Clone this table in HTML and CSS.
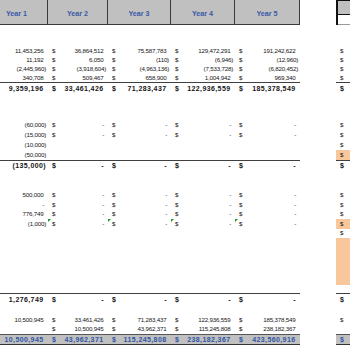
FILE: index.html
```html
<!DOCTYPE html>
<html>
<head>
<meta charset="utf-8">
<link rel="stylesheet" href="styles.css">
</head>
<body>
<div class="sheet">
  <div class="row h25">
    <div class="hc">Year 1</div><div class="hc">Year 2</div><div class="hc">Year 3</div><div class="hc">Year 4</div><div class="hc">Year 5</div>
    <div></div>
    <div class="shd"><div class="t"></div><div class="u"></div></div>
  </div>
  <div class="sp22"></div>

  <div class="row h9">
    <div class="c f"><span class="p">11,453,256</span></div>
    <div class="c"><span>$</span><span class="p">36,864,512</span></div>
    <div class="c"><span>$</span><span class="p">75,587,783</span></div>
    <div class="c"><span>$</span><span class="p">129,472,291</span></div>
    <div class="c"><span>$</span><span class="p">191,242,622</span></div>
    <div></div><div class="c"><span>$</span></div>
  </div>
  <div class="row h9">
    <div class="c f"><span class="p">11,192</span></div>
    <div class="c"><span>$</span><span class="p">6,050</span></div>
    <div class="c"><span>$</span><span>(110)</span></div>
    <div class="c"><span>$</span><span>(6,946)</span></div>
    <div class="c"><span>$</span><span>(12,960)</span></div>
    <div></div><div class="c"><span>$</span></div>
  </div>
  <div class="row h9">
    <div class="c f"><span>(2,445,960)</span></div>
    <div class="c"><span>$</span><span>(3,918,604)</span></div>
    <div class="c"><span>$</span><span>(4,963,136)</span></div>
    <div class="c"><span>$</span><span>(7,533,728)</span></div>
    <div class="c"><span>$</span><span>(6,820,452)</span></div>
    <div></div><div class="c"><span>$</span></div>
  </div>
  <div class="row h9">
    <div class="c f bb"><span class="p">340,708</span></div>
    <div class="c bb"><span>$</span><span class="p">509,467</span></div>
    <div class="c bb"><span>$</span><span class="p">658,900</span></div>
    <div class="c bb"><span>$</span><span class="p">1,004,942</span></div>
    <div class="c bb"><span>$</span><span class="p">969,340</span></div>
    <div></div><div class="c bb"><span>$</span></div>
  </div>
  <div class="row h10 b">
    <div class="c f"><span class="p">9,359,196</span></div>
    <div class="c"><span>$</span><span class="p">33,461,426</span></div>
    <div class="c"><span>$</span><span class="p">71,283,437</span></div>
    <div class="c"><span>$</span><span class="p">122,936,559</span></div>
    <div class="c"><span>$</span><span class="p">185,378,549</span></div>
    <div></div><div class="c"><span>$</span></div>
  </div>
  <div class="sp28"></div>

  <div class="row h9">
    <div class="c f"><span>(60,000)</span></div>
    <div class="c"><span>$</span><span class="d">-</span></div>
    <div class="c"><span>$</span><span class="d">-</span></div>
    <div class="c"><span>$</span><span class="d">-</span></div>
    <div class="c"><span>$</span><span class="d">-</span></div>
    <div></div><div class="c"><span>$</span></div>
  </div>
  <div class="row h10">
    <div class="c f"><span>(15,000)</span></div>
    <div class="c"><span>$</span><span class="d">-</span></div>
    <div class="c"><span>$</span><span class="d">-</span></div>
    <div class="c"><span>$</span><span class="d">-</span></div>
    <div class="c"><span>$</span><span class="d">-</span></div>
    <div></div><div class="c"><span>$</span></div>
  </div>
  <div class="row h10">
    <div class="c f"><span>(10,000)</span></div>
    <div class="c"></div><div class="c"></div><div class="c"></div><div class="c"></div>
    <div></div><div class="c"><span>$</span></div>
  </div>
  <div class="row h11">
    <div class="c f bb"><span>(50,000)</span></div>
    <div class="c bb"></div><div class="c bb"></div><div class="c bb"></div><div class="c bb"></div>
    <div></div><div class="c bb o"><span>$</span></div>
  </div>
  <div class="row h9 b">
    <div class="c f"><span>(135,000)</span></div>
    <div class="c"><span>$</span><span class="d">-</span></div>
    <div class="c"><span>$</span><span class="d">-</span></div>
    <div class="c"><span>$</span><span class="d">-</span></div>
    <div class="c"><span>$</span><span class="d">-</span></div>
    <div></div><div class="c"><span>$</span></div>
  </div>
  <div class="sp21"></div>

  <div class="row h9">
    <div class="c f"><span class="p">500,000</span></div>
    <div class="c"><span>$</span><span class="d">-</span></div>
    <div class="c"><span>$</span><span class="d">-</span></div>
    <div class="c"><span>$</span><span class="d">-</span></div>
    <div class="c"><span>$</span><span class="d">-</span></div>
    <div></div><div class="c"><span>$</span></div>
  </div>
  <div class="row h10">
    <div class="c f"><span class="d">-</span></div>
    <div class="c"><span>$</span><span class="d">-</span></div>
    <div class="c"><span>$</span><span class="d">-</span></div>
    <div class="c"><span>$</span><span class="d">-</span></div>
    <div class="c"><span>$</span><span class="d">-</span></div>
    <div></div><div class="c"><span>$</span></div>
  </div>
  <div class="row h9">
    <div class="c f"><span class="p">776,749</span></div>
    <div class="c"><span>$</span><span class="d">-</span></div>
    <div class="c"><span>$</span><span class="d">-</span></div>
    <div class="c"><span>$</span><span class="d">-</span></div>
    <div class="c"><span>$</span><span class="d">-</span></div>
    <div></div><div class="c"><span>$</span></div>
  </div>
  <div class="row h10">
    <div class="c f"><span>(1,000)</span></div>
    <div class="c tri"><span>$</span><span class="d">-</span></div>
    <div class="c tri"><span>$</span><span class="d">-</span></div>
    <div class="c tri"><span>$</span><span class="d">-</span></div>
    <div class="c tri"><span>$</span><span class="d">-</span></div>
    <div></div><div class="c o"><span>$</span></div>
  </div>
  <div class="row h9">
    <div class="c"></div><div class="c"></div><div class="c"></div><div class="c"></div><div class="c"></div>
    <div></div><div class="c"><span>$</span></div>
  </div>
  <div class="row h55">
    <div></div><div></div><div></div><div></div><div></div><div></div>
    <div class="oc"><div class="oblk"></div></div>
  </div>

  <div class="row h11 b">
    <div class="c f bt"><span class="p">1,276,749</span></div>
    <div class="c bt"><span>$</span><span class="d">-</span></div>
    <div class="c bt"><span>$</span><span class="d">-</span></div>
    <div class="c bt"><span>$</span><span class="d">-</span></div>
    <div class="c bt"><span>$</span><span class="d">-</span></div>
    <div></div><div class="c bt"><span>$</span></div>
  </div>
  <div class="sp11"></div>

  <div class="row h10">
    <div class="c f"><span class="p">10,500,945</span></div>
    <div class="c"><span>$</span><span class="p">33,461,426</span></div>
    <div class="c"><span>$</span><span class="p">71,283,437</span></div>
    <div class="c"><span>$</span><span class="p">122,936,559</span></div>
    <div class="c"><span>$</span><span class="p">185,378,549</span></div>
    <div></div><div class="c"><span>$</span></div>
  </div>
  <div class="row h9">
    <div class="c f"></div>
    <div class="c"><span>$</span><span class="p">10,500,945</span></div>
    <div class="c"><span>$</span><span class="p">43,962,371</span></div>
    <div class="c"><span>$</span><span class="p">115,245,808</span></div>
    <div class="c"><span>$</span><span class="p">238,182,367</span></div>
    <div></div><div class="c"></div>
  </div>
  <div class="row h11 b blue">
    <div class="c f tot"><span class="p">10,500,945</span></div>
    <div class="c tot"><span>$</span><span class="p">43,962,371</span></div>
    <div class="c tot"><span>$</span><span class="p">115,245,808</span></div>
    <div class="c tot"><span>$</span><span class="p">238,182,367</span></div>
    <div class="c tot"><span>$</span><span class="p">423,560,916</span></div>
    <div></div><div class="c tot"><span>$</span></div>
  </div>
</div>
</body>
</html>
```
FILE: styles.css
```css
html, body {
  margin: 0;
  padding: 0;
  background: #ffffff;
}
body {
  width: 350px;
  height: 350px;
  overflow: hidden;
  font-family: "Liberation Sans", Arial, sans-serif;
  color: #161616;
}
.sheet {
  margin-left: -14px;
  width: 380px;
}
.row {
  display: grid;
  grid-template-columns: 62px 60px 63px 64px 65px 36px 30px;
}
.h9 { height: 9px; }
.h10 { height: 10px; }
.h11 { height: 11px; }
.h25 { height: 25px; }
.h55 { height: 55px; }
.sp11 { height: 11px; }
.sp21 { height: 21px; }
.sp22 { height: 22px; }
.sp28 { height: 28px; }

.hc {
  box-sizing: border-box;
  background: #c0c0c0;
  border-right: 1px solid #3a3a3a;
  border-bottom: 1px solid #3a3a3a;
  color: #3a5aa8;
  font-weight: bold;
  font-size: 7.2px;
  display: flex;
  align-items: center;
  justify-content: center;
  padding-top: 2px;
}
.shd {
  box-sizing: border-box;
  border-left: 2px solid #111111;
  border-top: 1px solid #111111;
}
.shd .t {
  height: 13px;
  background: #c0c0c0;
  border-bottom: 1px solid #111111;
}
.shd .u {
  height: 9px;
  background: #ffffff;
  border-bottom: 1px solid #9a9a9a;
}

.c {
  box-sizing: border-box;
  position: relative;
  display: flex;
  align-items: center;
  justify-content: space-between;
  padding: 0 2px 0 4px;
  font-size: 6.2px;
  letter-spacing: -0.2px;
  line-height: 1;
  white-space: nowrap;
}
.c.f { justify-content: flex-end; }
.p { padding-right: 2.5px; }
.d { padding-right: 2px; }
.b .c {
  font-weight: bold;
  font-size: 7px;
  letter-spacing: 0.4px;
}
.bb { border-bottom: 1px solid #404040; }
.bt { border-top: 1px solid #404040; }
.o { background: #f8c89c; }
.oblk {
  height: 47px;
  background: #f8c89c;
}
.tot {
  background: #c0c0c0;
  border-top: 1px solid #555555;
  border-bottom: 1px solid #333333;
  color: #2f55a4;
}
.tri::before {
  content: "";
  position: absolute;
  left: 0;
  top: 0;
  border-top: 3px solid #1e9a2a;
  border-right: 3px solid transparent;
}
```
